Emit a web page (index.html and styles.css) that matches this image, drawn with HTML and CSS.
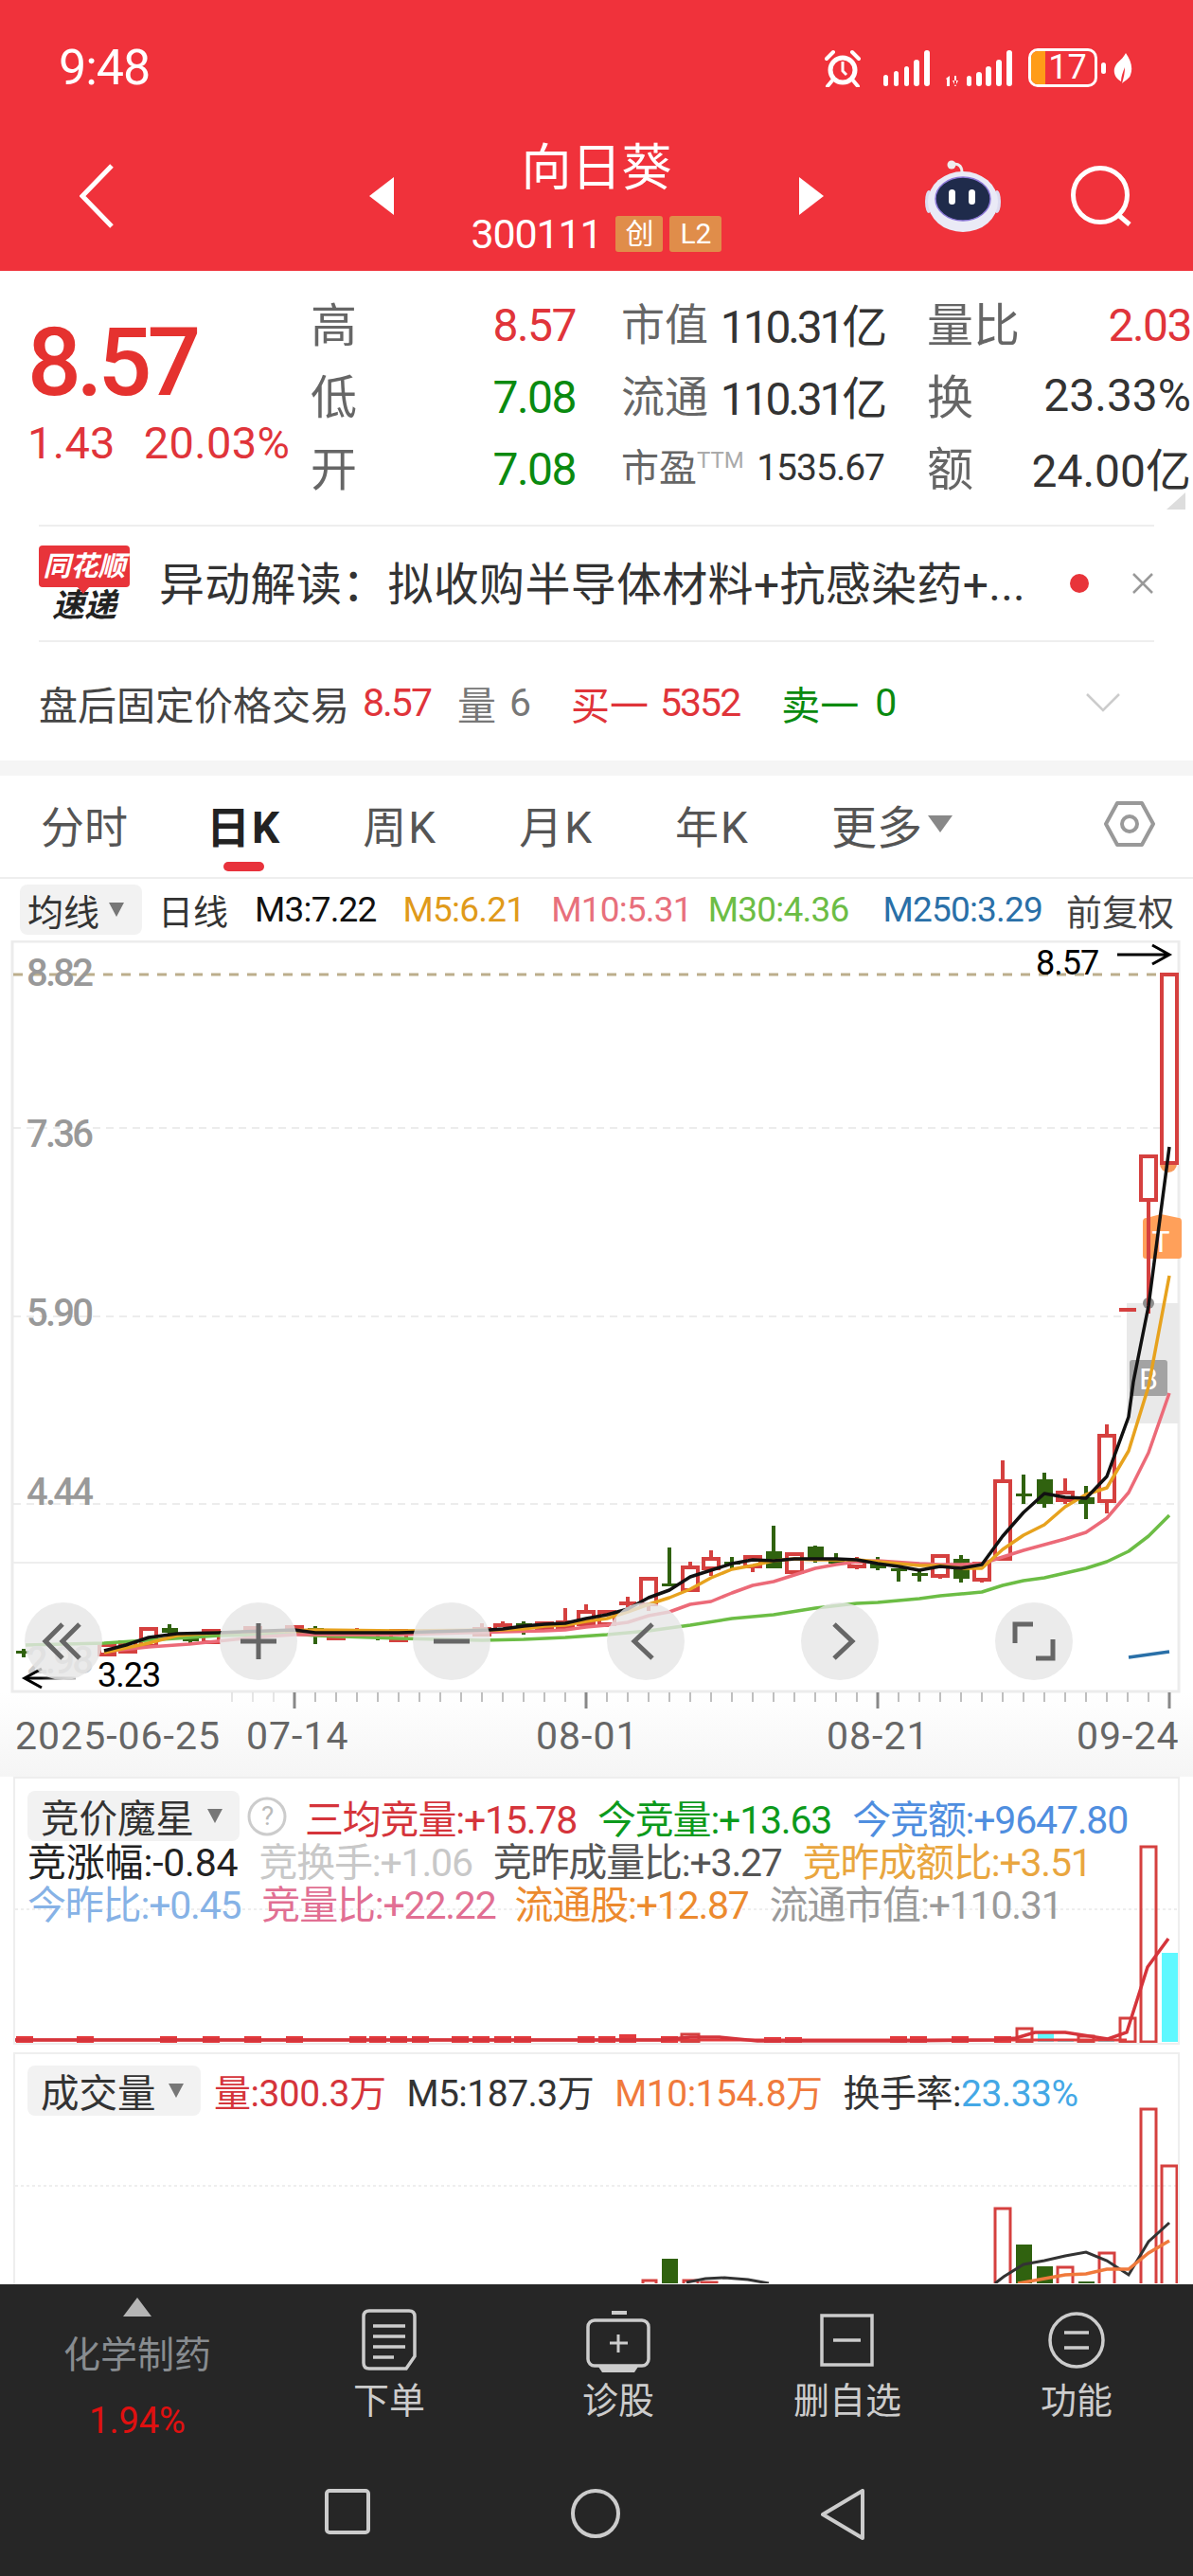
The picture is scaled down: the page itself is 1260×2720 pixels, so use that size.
FILE: index.html
```html
<!DOCTYPE html>
<html lang="zh-CN">
<head>
    <meta charset="UTF-8">
    <meta name="viewport" content="width=device-width, initial-scale=1.0">
    <title>向日葵 300111</title>
    <link rel="stylesheet" href="styles.css">
</head>
<body>
<div class="phone">
    <div class="content">
        <!-- Red header: status bar and stock title -->
        <header class="header">
            <div class="status">
                <span class="time">9:48</span>
                <div class="status-icons">
                    <svg class="alarm" width="38" height="40" viewBox="0 0 38 40"><circle cx="19" cy="22" r="13" fill="none" stroke="#fff" stroke-width="5"/><path d="M19 13v10l4 4" fill="none" stroke="#fff" stroke-width="3"/><path d="M2 10 9 3M36 10l-7-7M8 33l-5 6M30 33l5 6" stroke="#fff" stroke-width="4" stroke-linecap="round"/></svg>
                    <svg width="49" height="38" viewBox="0 0 49 38" fill="#fff"><rect x="0" y="26" width="5" height="12" rx="2.5"/><rect x="11" y="22" width="5" height="16" rx="2.5"/><rect x="22" y="17" width="5" height="21" rx="2.5"/><rect x="32" y="10" width="6" height="28" rx="3"/><rect x="43" y="0" width="6" height="38" rx="3"/></svg>
                    <svg width="70" height="38" viewBox="0 0 70 38" fill="#fff"><path d="M0 30l4-3v11h-3V31zM9 27h2v11H9zM7 32l3 6 3-6z"/><rect x="22" y="27" width="5" height="11" rx="2.5"/><rect x="32" y="23" width="6" height="15" rx="3"/><rect x="42" y="17" width="6" height="21" rx="3"/><rect x="53" y="10" width="6" height="28" rx="3"/><rect x="64" y="0" width="6" height="38" rx="3"/></svg>
                    <div class="battery"><span class="battery-level"></span><span class="battery-num">17</span></div>
                    <span class="battery-nub"></span>
                    <svg class="leaf" width="20" height="32" viewBox="0 0 20 32"><path d="M13 0c5 7 8 15 5 23-1 4-6 6-9 9 2-6 3-12 3-17-2 5-4 10-4 15C2 27-2 19 3 12 6 8 10 6 13 0z" fill="#fff"/></svg>
                </div>
            </div>
            <div class="stock-nav">
                <svg class="back" width="36" height="68" viewBox="0 0 36 68"><path d="M34 2 3 34l31 32" fill="none" stroke="#fff" stroke-width="5"/></svg>
                <div class="stock-switch">
                    <span class="arrow arrow-left"></span>
                    <div class="stock-title">
                        <div class="stock-name">向日葵</div>
                        <div class="stock-code"><span>300111</span><em class="tag">创</em><em class="tag">L2</em></div>
                    </div>
                    <span class="arrow arrow-right"></span>
                </div>
                <div class="header-actions">
                    <svg width="80" height="78" viewBox="0 0 80 78">
                        <path d="M39 14c0-6-3-9-8-9" fill="none" stroke="#eee" stroke-width="3"/>
                        <circle cx="28" cy="6" r="4.5" fill="#eee"/>
                        <ellipse cx="4" cy="45" rx="4" ry="12" fill="#dcdcf0"/>
                        <ellipse cx="76" cy="45" rx="4" ry="12" fill="#dcdcf0"/>
                        <ellipse cx="40" cy="45" rx="37" ry="32" fill="#eaeaf6"/>
                        <ellipse cx="40" cy="42" rx="29" ry="23" fill="#1f2b4b" stroke="#8d78d8" stroke-width="1.5"/>
                        <rect x="25" y="32" width="7" height="16" rx="3.5" fill="#fff"/>
                        <rect x="46" y="32" width="7" height="16" rx="3.5" fill="#fff"/>
                    </svg>
                    <svg width="66" height="64" viewBox="0 0 66 64"><circle cx="31" cy="31" r="28.5" fill="none" stroke="#fff" stroke-width="5"/><path d="M49 51 62 62" stroke="#fff" stroke-width="5"/></svg>
                </div>
            </div>
        </header>

        <!-- Quote summary -->
        <section class="quote">
            <div class="quote-main">
                <div class="price-block">
                    <div class="price">8.57</div>
                    <div class="change"><span>1.43</span><span>20.03%</span></div>
                </div>
                <div class="stats">
                    <div class="stat stat-hl"><span class="lbl">高</span><span class="num red">8.57</span></div>
                    <div class="stat"><span class="lbl-s">市值</span><span class="val val-tight">110.31亿</span></div>
                    <div class="stat"><span class="lbl">量比</span><span class="num red">2.03</span></div>
                    <div class="stat stat-hl"><span class="lbl">低</span><span class="num green">7.08</span></div>
                    <div class="stat"><span class="lbl-s">流通</span><span class="val val-tight">110.31亿</span></div>
                    <div class="stat"><span class="lbl">换</span><span class="val">23.33%</span></div>
                    <div class="stat stat-hl"><span class="lbl">开</span><span class="num green">7.08</span></div>
                    <div class="stat"><span class="lbl-xs">市盈<sup>TTM</sup></span><span class="val-s">1535.67</span></div>
                    <div class="stat"><span class="lbl">额</span><span class="val">24.00亿</span></div>
                </div>
                <span class="corner"></span>
            </div>
            <div class="news">
                <div class="news-logo">
                    <span class="news-bubble">同花顺</span>
                    <span class="news-brand">速递</span>
                </div>
                <p class="news-text">异动解读：拟收购半导体材料+抗感染药+...</p>
                <span class="news-dot"></span>
                <svg width="24" height="24" viewBox="0 0 24 24"><path d="M2 2l20 20M22 2 2 22" stroke="#999" stroke-width="2.5"/></svg>
            </div>
            <div class="after-hours">
                <span>盘后固定价格交易</span>
                <span class="red ah-num ah-gap1">8.57</span>
                <span class="grey ah-gap2">量</span>
                <span class="grey ah-gap3">6</span>
                <span class="red ah-gap4">买一</span>
                <span class="red ah-num ah-gap6">5352</span>
                <span class="green ah-gap5">卖一</span>
                <span class="green ah-gap7">0</span>
                <svg class="ah-more" width="36" height="20" viewBox="0 0 36 20"><path d="M1 1l17 17L35 1" fill="none" stroke="#ccc" stroke-width="2.5"/></svg>
            </div>
        </section>

        <!-- Period tabs -->
        <nav class="tabs">
            <span class="tab-first">分时</span>
            <span class="tab-k active">日K</span>
            <span class="tab-k">周K</span>
            <span class="tab-k">月K</span>
            <span class="tab-k">年K</span>
            <span class="more">更多<i class="caret-big"></i></span>
            <svg class="settings" width="54" height="50" viewBox="0 0 54 50"><path d="M14 3h26l12 22-12 22H14L2 25z" fill="none" stroke="#999" stroke-width="4" stroke-linejoin="round"/><circle cx="27" cy="25" r="8" fill="none" stroke="#999" stroke-width="4"/></svg>
        </nav>

        <!-- Moving average legend -->
        <div class="ma-legend">
            <span class="chip chip-ma">均线<i class="caret"></i></span>
            <span class="ma-day">日线</span>
            <span class="ma-m3">M3:7.22</span>
            <span class="ma-m5">M5:6.21</span>
            <span class="ma-m10">M10:5.31</span>
            <span class="ma-m30">M30:4.36</span>
            <span class="ma-m250">M250:3.29</span>
            <span class="ma-adj">前复权</span>
        </div>

        <!-- Daily candlestick chart, drawn in page coordinates -->
        <svg class="kline" width="1260" height="883" viewBox="0 994 1260 883">
            <defs>
                <linearGradient id="axisBg" x1="0" y1="0" x2="0" y2="1"><stop offset="0" stop-color="#fff"/><stop offset="1" stop-color="#f5f5f5"/></linearGradient>
                <linearGradient id="lowArrow" x1="25" y1="0" x2="82" y2="0" gradientUnits="userSpaceOnUse"><stop offset="0.3" stop-color="#000"/><stop offset="1" stop-color="#bbb"/></linearGradient>
                <linearGradient id="tickFade" x1="0" y1="0" x2="1" y2="0"><stop offset="0" stop-color="#bbb"/><stop offset="1" stop-color="#666"/></linearGradient>
            </defs>
            <rect x="0" y="1788" width="1260" height="89" fill="url(#axisBg)"/>
            <rect class="frame" x="13" y="995" width="1232" height="792"/>

            <g class="grid">
                <path d="M14 1192H1245M14 1391H1245M14 1589H1245"/>
            </g>
            <path class="grid-solid" d="M14 1651H1245"/>
            <path class="grid-high" d="M14 1030H1226"/>

            <rect class="hold-band" x="1190" y="1377" width="55" height="127"/>
            <circle cx="1213" cy="1377" r="6" fill="#8d8d8d"/>
            <path class="tag-t" d="M1211 1287l15-4 19 4q3 0 3 4v36q0 3-3 3h-35q-3 0-3-3v-36q0-4 4-4z"/>
            <text class="tag-letter" x="1226" y="1323">T</text>
            <rect x="1193" y="1437" width="40" height="38" rx="3" fill="#a3a3a3"/>
            <text class="tag-letter" x="1213" y="1468">B</text>
            <circle cx="1234" cy="1230" r="9" fill="#f79a5b"/>

            <!-- rising days -->
            <path class="wick-up" d="M1213 1268V1388M1169 1505V1517M1169 1586V1599M1125 1562V1577M1125 1585V1589M1059 1543V1565M1059 1647V1649M1037 1669V1672M993 1665V1668M905 1645V1650M905 1655V1658M795 1655V1661M751 1638V1647M751 1657V1665M729 1650V1656M729 1680V1682M685 1695V1702M663 1687V1698M641 1716V1719M619 1695V1703M597 1699V1714M531 1713V1717M509 1715V1721M377 1720V1727M355 1731V1733M1191 1382V1386"/>
            <path class="dash-up" d="M1182 1384H1200M654 1694H672"/>
            <g class="candle-up">
                <rect x="1227" y="1030" width="16" height="199"/>
                <rect x="1205" y="1222" width="16" height="46"/>
                <rect x="1161" y="1517" width="16" height="69"/>
                <rect x="1117" y="1577" width="16" height="8"/>
                <rect x="1051" y="1565" width="16" height="82"/>
                <rect x="1029" y="1652" width="16" height="17"/>
                <rect x="985" y="1644" width="16" height="21"/>
                <rect x="897" y="1650" width="16" height="5"/>
                <rect x="831" y="1642" width="16" height="19"/>
                <rect x="787" y="1645" width="16" height="10"/>
                <rect x="743" y="1647" width="16" height="10"/>
                <rect x="721" y="1656" width="16" height="24"/>
                <rect x="677" y="1668" width="16" height="27"/>
                <rect x="633" y="1703" width="16" height="13"/>
                <rect x="611" y="1703" width="16" height="13"/>
                <rect x="589" y="1714" width="16" height="5"/>
                <rect x="567" y="1715" width="16" height="5"/>
                <rect x="523" y="1717" width="16" height="6"/>
                <rect x="501" y="1721" width="16" height="6"/>
                <rect x="413" y="1723" width="16" height="10"/>
                <rect x="347" y="1725" width="16" height="6"/>
                <rect x="303" y="1719" width="16" height="6"/>
                <rect x="259" y="1720" width="16" height="5"/>
                <rect x="215" y="1723" width="16" height="12"/>
                <rect x="149" y="1721" width="16" height="18"/>
                <rect x="127" y="1735" width="16" height="10"/>
                <rect x="105" y="1738" width="16" height="10"/>
            </g>
            <!-- falling days -->
            <path class="wick-down" d="M1147 1570V1605M1103 1556V1593M1081 1558V1589M1015 1643V1672M971 1658V1671M949 1657V1671M927 1645V1659M883 1641V1652M861 1633V1651M817 1612V1657M773 1645V1658M707 1635V1676M553 1713V1727M399 1722V1733M333 1718V1737M201 1727V1737M179 1716V1727M25 1742V1751"/>
            <g class="candle-down">
                <rect x="1139" y="1582" width="17" height="7"/>
                <rect x="1095" y="1563" width="17" height="26"/>
                <rect x="1073" y="1578" width="17" height="3"/>
                <rect x="1007" y="1647" width="17" height="21"/>
                <rect x="963" y="1662" width="17" height="3"/>
                <rect x="941" y="1657" width="17" height="3"/>
                <rect x="919" y="1652" width="17" height="5"/>
                <rect x="875" y="1647" width="17" height="5"/>
                <rect x="853" y="1634" width="17" height="14"/>
                <rect x="809" y="1639" width="17" height="18"/>
                <rect x="765" y="1650" width="17" height="3"/>
                <rect x="699" y="1673" width="17" height="3"/>
                <rect x="545" y="1715" width="17" height="3"/>
                <rect x="391" y="1725" width="17" height="3"/>
                <rect x="325" y="1720" width="17" height="3"/>
                <rect x="193" y="1728" width="17" height="6"/>
                <rect x="171" y="1720" width="17" height="5"/>
                <rect x="17" y="1744" width="17" height="3"/>
            </g>

            <!-- moving averages -->
            <polyline class="ma-line line-m250" points="1192,1751 1235,1745"/>
            <polyline class="ma-line line-m30" points="27,1738 110,1736 231,1728 311,1726 333,1728 421,1731 509,1733 553,1732 597,1730 641,1727 685,1723 729,1717 773,1710 817,1706 861,1699 905,1694 927,1693 949,1691 971,1689 993,1686 1015,1684 1037,1682 1059,1675 1081,1670 1103,1667 1125,1662 1147,1657 1169,1650 1192,1639 1213,1623 1235,1601"/>
            <polyline class="ma-line line-m10" points="110,1745 157,1740 200,1737 267,1730 311,1727 421,1727 531,1724 575,1723 597,1722 619,1719 641,1717 663,1714 685,1707 707,1703 729,1695 751,1692 773,1683 795,1675 817,1671 839,1664 861,1657 883,1653 905,1650 927,1649 971,1652 993,1653 1015,1653 1037,1652 1059,1645 1081,1638 1103,1632 1125,1626 1147,1619 1169,1604 1192,1577 1213,1535 1235,1472"/>
            <polyline class="ma-line line-m5" points="110,1746 157,1736 187,1728 230,1725 333,1722 421,1723 531,1722 553,1721 575,1718 597,1717 619,1713 641,1710 663,1703 685,1695 707,1688 729,1679 751,1667 773,1658 795,1654 817,1649 839,1647 861,1648 883,1648 905,1648 927,1650 971,1654 993,1654 1015,1657 1037,1657 1059,1637 1081,1622 1103,1611 1125,1592 1147,1579 1169,1572 1192,1533 1213,1465 1235,1348"/>
            <polyline class="ma-line line-m3" points="110,1744 133,1738 157,1730 187,1726 230,1725 311,1722 333,1725 421,1725 517,1722 531,1721 553,1718 575,1716 597,1715 619,1710 641,1706 663,1700 685,1688 707,1680 729,1666 751,1659 773,1652 795,1648 817,1649 839,1647 861,1647 883,1647 905,1648 927,1652 949,1655 971,1659 993,1655 1015,1657 1037,1653 1059,1623 1081,1598 1103,1578 1125,1582 1147,1583 1169,1560 1192,1497 1197,1460 1213,1380 1235,1212"/>

            <!-- price labels -->
            <text class="y-label" x="28" y="1042">8.82</text>
            <text class="y-label" x="28" y="1212">7.36</text>
            <text class="y-label" x="28" y="1401">5.90</text>
            <text class="y-label" x="28" y="1590">4.44</text>
            <text class="y-label low" x="28" y="1768">2.98</text>
            <text class="extreme" x="1094" y="1030">8.57</text>
            <path class="extreme-arrow" d="M1180 1009H1234M1217 999l18 10-18 10"/>
            <text class="extreme" x="103" y="1782">3.23</text>
            <path d="M26 1773H80" stroke="url(#lowArrow)" stroke-width="3" fill="none"/>
            <path d="M44 1763l-18 10 18 10" stroke="#000" stroke-width="3" fill="none"/>

            <!-- floating chart controls -->
            <g class="float-btn">
                <circle cx="67" cy="1734" r="41"/>
                <circle cx="273" cy="1734" r="41"/>
                <circle cx="477" cy="1734" r="41"/>
                <circle cx="682" cy="1734" r="41"/>
                <circle cx="887" cy="1734" r="41"/>
                <circle cx="1092" cy="1734" r="41"/>
            </g>
            <path class="float-icon" d="M66 1716 48 1734l18 18M84 1716 66 1734l18 18M254 1734H292M273 1715V1753M458 1734H496M689 1716 670 1734l19 18M881 1716 900 1734l-19 18M1072 1736V1716H1091M1112 1732V1752H1094"/>

            <!-- time axis -->
            <path class="tick tick-faint" d="M245 1788V1798M267 1788V1798M289 1788V1798"/>
            <path class="tick" d="M333 1788V1798M355 1788V1798M377 1788V1798M399 1788V1798M421 1788V1798M443 1788V1798M465 1788V1798M487 1788V1798M509 1788V1798M531 1788V1798M553 1788V1798M575 1788V1798M597 1788V1798M641 1788V1798M663 1788V1798M685 1788V1798M707 1788V1798M729 1788V1798M751 1788V1798M773 1788V1798M795 1788V1798M817 1788V1798M839 1788V1798M861 1788V1798M883 1788V1798M905 1788V1798M949 1788V1798M971 1788V1798M993 1788V1798M1015 1788V1798M1037 1788V1798M1059 1788V1798M1081 1788V1798M1103 1788V1798M1125 1788V1798M1147 1788V1798M1169 1788V1798M1191 1788V1798M1213 1788V1798"/>
            <path class="tick-major" d="M311 1788V1805M619 1788V1805M927 1788V1805M1235 1788V1805"/>
            <text class="x-label" x="16" y="1848">2025-06-25</text>
            <text class="x-label" x="260" y="1848" fill="url(#tickFade)">07-14</text>
            <text class="x-label" x="566" y="1848">08-01</text>
            <text class="x-label" x="873" y="1848">08-21</text>
            <text class="x-label" x="1137" y="1848">09-24</text>
        </svg>

        <!-- Auction indicator panel -->
        <section class="panel panel-auction">
            <svg class="panel-chart" width="1228" height="279" viewBox="16 1879 1228 279">
                <path class="panel-grid" d="M16 2017H1244"/>
                <rect x="1227" y="2063" width="17" height="94" fill="#5ff8ff"/>
                <path d="M1096 2147h17v10h-17zM1117 2154h17v3h-17zM1160 2155h17v2h-17z" fill="#5ff8ff"/>
                <path class="baseline" d="M16 2155H1190"/>
                <path fill="#e33a3d" d="M17 2151h18v7H17zM81 2151h18v7H81zM169 2151h18v7h-18zM214 2151h18v7h-18zM258 2151h18v7h-18zM302 2151h18v7h-18zM369 2151h18v7h-18zM390 2151h18v7h-18zM412 2151h18v7h-18zM435 2151h18v7h-18zM477 2151h18v7h-18zM499 2151h18v7h-18zM522 2151h18v7h-18zM543 2151h18v7h-18zM610 2151h18v7h-18zM632 2151h18v7h-18zM654 2149h18v9h-18zM698 2151h18v7h-18zM807 2152h18v6h-18zM829 2152h18v6h-18zM940 2151h18v7h-18zM961 2151h18v7h-18zM1005 2151h18v7h-18zM1050 2151h18v7h-18z"/>
                <g class="bar-up">
                    <rect x="720" y="2149" width="18" height="8"/>
                    <rect x="1074" y="2143" width="16" height="14"/>
                    <rect x="1139" y="2151" width="16" height="6"/>
                    <rect x="1183" y="2132" width="16" height="25"/>
                    <rect x="1205" y="1951" width="16" height="206"/>
                </g>
                <polyline class="auction-line" points="16,2155 700,2155 729,2152 760,2152 800,2156 950,2156 1050,2155 1073,2153 1093,2147 1125,2147 1170,2154 1190,2147 1212,2078 1234,2048"/>
            </svg>
            <div class="ind-row ind-first">
                <span class="chip chip-ind chip-auction">竞价魔星<i class="caret"></i></span>
                <svg class="help" width="44" height="44" viewBox="0 0 44 44"><circle cx="22" cy="22" r="19" fill="none" stroke="#ccc" stroke-width="3"/><text x="22" y="31" text-anchor="middle">?</text></svg>
                <span class="i-red">三均竞量:+15.78</span>
                <span class="i-green">今竞量:+13.63</span>
                <span class="i-blue">今竞额:+9647.80</span>
            </div>
            <div class="ind-row">
                <span class="i-black">竞涨幅:-0.84</span>
                <span class="i-faint">竞换手:+1.06</span>
                <span class="i-dark">竞昨成量比:+3.27</span>
                <span class="i-gold">竞昨成额比:+3.51</span>
            </div>
            <div class="ind-row">
                <span class="i-sky">今昨比:+0.45</span>
                <span class="i-pink">竞量比:+22.22</span>
                <span class="i-orange">流通股:+12.87</span>
                <span class="i-grey">流通市值:+110.31</span>
            </div>
        </section>

        <!-- Volume panel -->
        <section class="panel panel-volume">
            <svg class="panel-chart" width="1228" height="242" viewBox="16 2170 1228 242">
                <path class="panel-grid" d="M16 2309H1244"/>
                <path fill="#30620f" d="M699 2386h17v26h-17zM1073 2371h17v41h-17zM1095 2394h17v18h-17zM1139 2410h17v2h-17z"/>
                <g class="bar-up">
                    <rect x="679" y="2409" width="14" height="8"/>
                    <rect x="722" y="2409" width="15" height="8"/>
                    <rect x="741" y="2411" width="16" height="8"/>
                    <rect x="1051" y="2333" width="16" height="84"/>
                    <rect x="1117" y="2395" width="16" height="30"/>
                    <rect x="1161" y="2380" width="16" height="40"/>
                    <rect x="1205" y="2228" width="16" height="200"/>
                    <rect x="1227" y="2288" width="16" height="140"/>
                </g>
                <polyline class="vol-m5" points="725,2411 745,2407 765,2406 790,2408 812,2412"/>
                <polyline class="vol-m5" points="1051,2412 1060,2405 1081,2392 1103,2388 1125,2383 1147,2379 1169,2388 1192,2403 1213,2368 1235,2348"/>
                <polyline class="vol-m10" points="1075,2412 1081,2411 1103,2407 1125,2403 1147,2402 1169,2397 1192,2397 1213,2380 1235,2367"/>
            </svg>
            <div class="ind-row ind-volume">
                <span class="chip chip-ind chip-vol">成交量<i class="caret"></i></span>
                <span class="v-vol">量:300.3万</span>
                <span class="v-m5">M5:187.3万</span>
                <span class="v-m10">M10:154.8万</span>
                <span class="v-turn">换手率:<b>23.33%</b></span>
            </div>
        </section>
    </div>

    <!-- Dark action bar and system navigation -->
    <footer class="footer">
        <div class="actions">
            <div class="sector">
                <i class="sector-arrow"></i>
                <span class="sector-name">化学制药</span>
                <span class="sector-pct">1.94%</span>
            </div>
            <div class="action">
                <svg width="70" height="70" viewBox="0 0 70 70"><path d="M14 4h42q6 0 6 6v42l-9 13H14q-6 0-6-6V10q0-6 6-6z" fill="none" stroke="#ccc" stroke-width="3.5"/><path d="M18 20h34M18 31h34M18 42h34M18 53h22" stroke="#ccc" stroke-width="3.5"/></svg>
                <span>下单</span>
            </div>
            <div class="action">
                <svg width="70" height="70" viewBox="0 0 70 70"><path d="M28 6h16" stroke="#ccc" stroke-width="4"/><rect x="3" y="14" width="64" height="48" rx="7" fill="none" stroke="#ccc" stroke-width="3.5"/><path d="M35 29v19M26 38h19" stroke="#ccc" stroke-width="3"/><path d="M14 63h42l-4 6H18z" fill="#ccc"/></svg>
                <span>诊股</span>
            </div>
            <div class="action">
                <svg width="70" height="70" viewBox="0 0 70 70"><rect x="8" y="9" width="53" height="52" fill="none" stroke="#ccc" stroke-width="3.5"/><path d="M20 35h29" stroke="#ccc" stroke-width="3.5"/></svg>
                <span>删自选</span>
            </div>
            <div class="action">
                <svg width="70" height="70" viewBox="0 0 70 70"><circle cx="35" cy="35" r="28" fill="none" stroke="#ccc" stroke-width="3.5"/><path d="M22 27h26M22 43h26" stroke="#ccc" stroke-width="3.5"/></svg>
                <span>功能</span>
            </div>
        </div>
        <div class="sys-nav">
            <svg width="48" height="48" viewBox="0 0 48 48"><rect x="2" y="2" width="44" height="44" rx="3" fill="none" stroke="#ccc" stroke-width="4"/></svg>
            <svg width="52" height="52" viewBox="0 0 52 52"><circle cx="26" cy="26" r="24" fill="none" stroke="#ccc" stroke-width="4"/></svg>
            <svg width="46" height="54" viewBox="0 0 46 54"><path d="M44 2v50L2 27z" fill="none" stroke="#ccc" stroke-width="4" stroke-linejoin="round"/></svg>
        </div>
    </footer>
</div>
</body>
</html>
```

FILE: styles.css
```css
* {
    box-sizing: border-box;
}

body {
    margin: 0;
    background-color: #fff;
    font-family: Roboto, "Noto Sans CJK SC", sans-serif;
    color: #333;
}

.phone {
    width: 1260px;
    height: 2720px;
    display: flex;
    flex-direction: column;
    overflow: hidden;
}

.content {
    flex: 1;
    min-height: 0;
    overflow: hidden;
}

.red { color: #e0343a; }
.green { color: #0a8a0f; }
.grey { color: #777; }

/* Red header */
.header {
    height: 286px;
    background-color: #f0323b;
    color: #fff;
}

.status {
    height: 120px;
    padding: 46px 64px 0 62px;
    display: flex;
    justify-content: space-between;
    align-items: flex-start;
}

.time {
    font-size: 52px;
    line-height: 52px;
    letter-spacing: -1px;
}

.status-icons {
    display: flex;
    align-items: center;
    height: 50px;
    padding-top: 1px;
}

.alarm { margin-right: 24px; }
.status-icons svg:nth-child(2) { margin-right: 17px; }
.status-icons svg:nth-child(3) { margin-right: 17px; }

.battery {
    position: relative;
    width: 73px;
    height: 41px;
    border: 3px solid #fff;
    border-radius: 10px;
    overflow: hidden;
    text-align: center;
}

.battery-level {
    position: absolute;
    left: 0;
    top: 0;
    bottom: 0;
    width: 15px;
    background-color: #ff9c18;
}

.battery-num {
    position: relative;
    left: 5px;
    font-size: 36px;
    line-height: 35px;
}

.battery-nub {
    width: 5px;
    height: 12px;
    margin: 0 8px 0 4px;
    border-radius: 3px;
    background-color: #fff;
}

.stock-nav {
    height: 166px;
    padding: 25px 63px 17px 84px;
    display: flex;
    align-items: center;
    position: relative;
}

.stock-switch {
    position: absolute;
    left: 390px;
    width: 480px;
    display: flex;
    align-items: center;
    justify-content: space-between;
}

.arrow {
    width: 0;
    height: 0;
    border-top: 20px solid transparent;
    border-bottom: 20px solid transparent;
}

.arrow-left { border-right: 26px solid #fff; }
.arrow-right { border-left: 26px solid #fff; }

.stock-title {
    text-align: center;
}

.stock-name {
    font-size: 53px;
    line-height: 60px;
    margin-top: 3px;
    margin-bottom: 17px;
}

.stock-code {
    display: flex;
    align-items: center;
    height: 44px;
    font-size: 43px;
}

.stock-code span {
    letter-spacing: -1.2px;
    margin-right: 15px;
}

.tag {
    width: 50px;
    height: 38px;
    margin-right: 7px;
    border-radius: 3px;
    background-color: #e08d4a;
    font-style: normal;
    font-size: 30px;
    line-height: 38px;
    text-align: center;
}

.tag:last-child {
    width: 55px;
    margin-right: 0;
}

.header-actions {
    margin-left: auto;
    display: flex;
    align-items: center;
    gap: 74px;
}

/* Quote summary */
.quote-main {
    display: flex;
    position: relative;
    padding-top: 18px;
    padding-bottom: 22px;
}

.price-block {
    width: 328px;
    padding: 29px 0 0 29px;
}

.price {
    font-size: 100px;
    line-height: 100px;
    letter-spacing: -5px;
    font-weight: 500;
    color: #e5322f;
}

.change {
    margin-top: 10px;
    display: flex;
    gap: 30px;
    font-size: 47px;
    line-height: 50px;
    letter-spacing: 0.3px;
    color: #e0343a;
}

.stats {
    display: grid;
    grid-template-columns: 283px 278px 279px;
    grid-auto-rows: 76px;
    column-gap: 45px;
}

.stat-hl {
    padding-right: 3px;
}

.stat {
    display: flex;
    justify-content: space-between;
    align-items: center;
    font-size: 48px;
}

.lbl, .lbl-s, .lbl-xs {
    color: #666;
    margin-top: -6px;
}

.lbl { font-size: 49px; }
.lbl-s { font-size: 46px; }
.lbl-xs { font-size: 40px; }

.lbl-xs sup {
    font-size: 24px;
    color: #aaa;
    line-height: 0;
    vertical-align: 14px;
}

.num {
    letter-spacing: -1.5px;
    margin-top: 2px;
}

.val {
    color: #333;
    margin-top: -2px;
}

.val-tight {
    letter-spacing: -3.2px;
}

.val-s {
    color: #333;
    font-size: 39px;
    letter-spacing: -1px;
}

.corner {
    position: absolute;
    right: 8px;
    bottom: 16px;
    width: 0;
    height: 0;
    border-left: 20px solid transparent;
    border-bottom: 18px solid #ddd;
}

.news {
    height: 124px;
    margin: 0 41px;
    border-top: 2px solid #eee;
    border-bottom: 2px solid #eee;
    display: flex;
    align-items: center;
}

.news-logo {
    width: 96px;
    display: flex;
    flex-direction: column;
    align-items: center;
    font-style: italic;
    font-weight: 700;
    line-height: 1;
}

.news-bubble {
    position: relative;
    width: 96px;
    height: 44px;
    border-radius: 4px;
    background-color: #e8343a;
    color: #fff;
    font-size: 29px;
    line-height: 44px;
    text-align: center;
}

.news-bubble::after {
    content: "";
    position: absolute;
    left: 40px;
    bottom: -7px;
    border-top: 8px solid #e8343a;
    border-left: 7px solid transparent;
    border-right: 7px solid transparent;
}

.news-brand {
    margin-top: 2px;
    color: #222;
    font-size: 34px;
}

.news-text {
    flex: 1;
    margin: -7px 0 0 31px;
    font-size: 48px;
    letter-spacing: 0.3px;
    color: #333;
    white-space: nowrap;
}

.news-dot {
    width: 20px;
    height: 20px;
    margin-right: 45px;
    border-radius: 50%;
    background-color: #e8343a;
}

.after-hours {
    height: 125px;
    margin: 0 41px;
    padding-top: 2px;
    display: flex;
    align-items: center;
    font-size: 41px;
    color: #444;
}

.ah-num { letter-spacing: -2px; }

.ah-gap1 { margin-left: 14px; }
.ah-gap2 { margin-left: 28px; }
.ah-gap3 { margin-left: 14px; }
.ah-gap4 { margin-left: 42px; }
.ah-gap5 { margin-left: 44px; }
.ah-gap6 { margin-left: 12px; }
.ah-gap7 { margin-left: 17px; }

.ah-more {
    margin-left: auto;
    margin-right: 36px;
}

/* Period tabs */
.tabs {
    height: 125px;
    padding: 0 40px 6px 43px;
    border-top: 16px solid #f5f5f5;
    border-bottom: 2px solid #eee;
    display: flex;
    align-items: center;
    gap: 86px;
    font-size: 46px;
    color: #555;
}

.tab-first {
    margin-right: -3px;
}

.tab-k {
    letter-spacing: 2px;
}

.tabs .active {
    position: relative;
    font-weight: 700;
    color: #222;
}

.tabs .active::after {
    content: "";
    position: absolute;
    left: 18px;
    right: 18px;
    bottom: -17px;
    height: 10px;
    border-radius: 5px;
    background-color: #e8323c;
}

.more {
    display: flex;
    align-items: center;
    font-size: 48px;
}

.caret-big {
    margin-left: 6px;
    border-top: 18px solid #888;
    border-left: 13px solid transparent;
    border-right: 13px solid transparent;
}

.settings {
    margin-left: auto;
}

/* Moving average legend */
.ma-legend {
    height: 65px;
    padding-left: 21px;
    display: flex;
    align-items: center;
    gap: 28px;
    font-size: 37px;
    letter-spacing: -0.8px;
}

.chip {
    display: flex;
    align-items: center;
    height: 53px;
    border-radius: 8px;
    background-color: #f2f2f2;
    color: #333;
    letter-spacing: 0;
}

.chip-ma {
    width: 129px;
    padding-left: 8px;
    margin-right: -11px;
    font-size: 38px;
}

.caret {
    margin-left: 10px;
    border-top: 15px solid #777;
    border-left: 8px solid transparent;
    border-right: 8px solid transparent;
}

.ma-day { color: #333; letter-spacing: 0; }
.ma-m3 { color: #111; }
.ma-m5 { color: #e09a1a; }
.ma-m10 { color: #e8707c; margin-right: -11px; }
.ma-m30 { color: #6cbd45; margin-right: 8px; }
.ma-m250 { color: #2a70a8; margin-right: -3px; }
.ma-adj { color: #444; letter-spacing: 0; font-size: 38px; }

/* Candlestick chart */
.kline {
    display: block;
}

.frame {
    fill: none;
    stroke: #ececec;
    stroke-width: 3;
}

.grid path {
    fill: none;
    stroke: #e6e6e6;
    stroke-width: 1.5;
    stroke-dasharray: 8 6;
}

.grid-solid {
    stroke: #eee;
    stroke-width: 2;
}

.grid-high {
    fill: none;
    stroke: #bcae8c;
    stroke-width: 3;
    stroke-dasharray: 10 9;
}

.hold-band {
    fill: #e9e9e9;
}

.tag-t {
    fill: #ffa05a;
}

.tag-letter {
    fill: #fff;
    font-size: 32px;
    text-anchor: middle;
}

.wick-up, .dash-up {
    fill: none;
    stroke: #d5403f;
    stroke-width: 4;
}

.candle-up rect {
    fill: #fff;
    stroke: #d5403f;
    stroke-width: 4;
}

.wick-down {
    fill: none;
    stroke: #30620f;
    stroke-width: 4;
}

.candle-down rect {
    fill: #30620f;
}

.ma-line {
    fill: none;
    stroke-width: 3.5;
    stroke-linejoin: round;
}

.line-m3 { stroke: #111; }
.line-m5 { stroke: #e7a21e; }
.line-m10 { stroke: #ec6a78; }
.line-m30 { stroke: #6cbd45; }
.line-m250 { stroke: #2a70a8; }

.y-label {
    font-size: 40px;
    font-weight: 500;
    letter-spacing: -2.8px;
    fill: #999;
}

.y-label.low {
    fill: #ccc;
}

.extreme {
    font-size: 36px;
    letter-spacing: -1px;
    fill: #000;
}

.extreme-arrow {
    fill: none;
    stroke: #000;
    stroke-width: 3;
}

.float-btn circle {
    fill: #e6e6e6;
    fill-opacity: 0.8;
}

.float-icon {
    fill: none;
    stroke: #666;
    stroke-width: 5;
}

.tick {
    stroke: #aaa;
    stroke-width: 1.5;
}

.tick-faint {
    stroke: #ddd;
}

.tick-major {
    stroke: #888;
    stroke-width: 3;
}

.x-label {
    font-size: 41px;
    letter-spacing: 1px;
    fill: #666;
}

/* Indicator panels */
.panel {
    position: relative;
    width: 1232px;
    margin: 0 14px;
    border: 2px solid #eee;
}

.panel-auction {
    height: 283px;
    padding: 13px 0 0 13px;
}

.panel-volume {
    height: 260px;
    margin-top: 8px;
    border-bottom: 0;
    padding: 11px 0 0 13px;
}

.panel-chart {
    position: absolute;
    left: 0;
    top: 0;
}

.panel-grid {
    fill: none;
    stroke: #eee;
    stroke-width: 2;
    stroke-dasharray: 3 3;
}

.baseline {
    stroke: #e33a3d;
    stroke-width: 3;
}

.bar-up rect {
    fill: none;
    stroke: #d5403f;
    stroke-width: 3;
}

.auction-line {
    fill: none;
    stroke: #d5343b;
    stroke-width: 3.5;
}

.vol-m5 {
    fill: none;
    stroke: #333;
    stroke-width: 3;
}

.vol-m10 {
    fill: none;
    stroke: #f07a3c;
    stroke-width: 3.5;
}

.ind-row {
    position: relative;
    display: flex;
    align-items: center;
    gap: 22px;
    height: 45px;
    font-size: 41px;
    letter-spacing: -1.2px;
    white-space: nowrap;
}

.ind-first {
    height: 53px;
    margin-bottom: -4px;
    gap: 18px;
}

.chip-ind {
    padding: 0 18px 0 14px;
    font-size: 40.5px;
    justify-content: space-between;
}

.chip-auction {
    width: 224px;
    margin-right: -10px;
}

.chip-vol {
    width: 183px;
    margin-right: -8px;
}

.help {
    margin: 0 0 0 -1px;
}

.help text {
    font-size: 28px;
    fill: #bbb;
}

.i-red { color: #d5343b; }
.i-green { color: #0c9a1c; margin-left: 4px; }
.i-blue { color: #4f8edf; margin-left: 4px; }
.i-black { color: #222; letter-spacing: -0.2px; }
.i-faint { color: #c8c8c8; }
.i-dark { color: #555; }
.i-gold { color: #e9a63f; }
.i-sky { color: #86b2e6; }
.i-pink { color: #e16f93; }
.i-orange { color: #ec8a2e; margin-left: -2px; }
.i-grey { color: #9a9a9a; }

.ind-volume {
    height: 54px;
    gap: 22px;
    font-size: 39px;
    letter-spacing: -0.5px;
}

.v-vol { color: #d5343b; }
.v-m5 { color: #333; }
.v-m10 { color: #f07a3c; }
.v-turn { color: #333; }

.v-turn b {
    font-weight: 400;
    color: #44a8e6;
}

/* Dark footer */
.footer {
    flex: none;
    height: 308px;
    background-color: #262626;
    color: #ccc;
}

.actions {
    height: 200px;
    display: grid;
    grid-template-columns: 290px 242px 242px 242px 242px;
    padding-top: 14px;
}

.sector {
    display: flex;
    flex-direction: column;
    align-items: center;
}

.sector-arrow {
    border-bottom: 20px solid #b5b5b5;
    border-left: 15px solid transparent;
    border-right: 15px solid transparent;
}

.sector-name {
    margin-top: 16px;
    font-size: 39px;
    line-height: 50px;
    color: #888c90;
}

.sector-pct {
    margin-top: 19px;
    font-size: 38px;
    line-height: 50px;
    color: #e01010;
}

.action {
    display: flex;
    flex-direction: column;
    align-items: center;
    padding-top: 10px;
    font-size: 38px;
}

.action span {
    margin-top: 7px;
    line-height: 44px;
}

.sys-nav {
    height: 108px;
    padding: 16px 0 0 343px;
    display: flex;
    align-items: flex-start;
    gap: 212px;
}
```
